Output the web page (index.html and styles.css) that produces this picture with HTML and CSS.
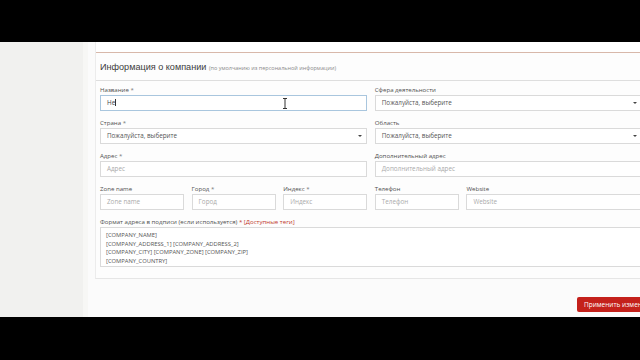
FILE: index.html
```html
<!DOCTYPE html>
<html lang="ru">
<head>
<meta charset="utf-8">
<title>Информация о компании</title>
<link rel="stylesheet" href="styles.css">
</head>
<body>
<div class="screen">
  <div class="bar"></div>
  <div class="main">
    <aside class="sidebar"></aside>
    <div class="gutter"></div>
    <div class="content">
      <section class="card">
        <div class="card-top"></div>
        <h2 class="card-title">Информация о компании <small>(по умолчанию из персональной информации)</small></h2>
        <div class="form">
          <div class="field half">
            <label>Название <span class="req">*</span></label>
            <div class="input focus">He<span class="caret"></span></div>
          </div>
          <div class="field half">
            <label>Сфера деятельности</label>
            <div class="input select">Пожалуйста, выберите<span class="arrow"></span></div>
          </div>
          <div class="field half">
            <label>Страна <span class="req">*</span></label>
            <div class="input select">Пожалуйста, выберите<span class="arrow"></span></div>
          </div>
          <div class="field half">
            <label>Область</label>
            <div class="input select">Пожалуйста, выберите<span class="arrow"></span></div>
          </div>
          <div class="field half">
            <label>Адрес <span class="req">*</span></label>
            <div class="input ph">Адрес</div>
          </div>
          <div class="field half">
            <label>Дополнительный адрес</label>
            <div class="input ph">Дополнительный адрес</div>
          </div>
          <div class="field">
            <label>Zone name</label>
            <div class="input ph">Zone name</div>
          </div>
          <div class="field">
            <label>Город <span class="req">*</span></label>
            <div class="input ph">Город</div>
          </div>
          <div class="field">
            <label>Индекс <span class="req">*</span></label>
            <div class="input ph">Индекс</div>
          </div>
          <div class="field">
            <label>Телефон</label>
            <div class="input ph">Телефон</div>
          </div>
          <div class="field wide2">
            <label>Website</label>
            <div class="input ph">Website</div>
          </div>
          <div class="field full">
            <label>Формат адреса в подписи (если используется) <span class="req red">*</span> <a class="tags">[Доступные теги]</a></label>
            <div class="textarea">[COMPANY_NAME]<br>[COMPANY_ADDRESS_1] [COMPANY_ADDRESS_2]<br>[COMPANY_CITY] [COMPANY_ZONE] [COMPANY_ZIP]<br>[COMPANY_COUNTRY]<br>[COMPANY_WEBSITE]</div>
          </div>
        </div>
      </section>
      <div class="actions"><button class="btn">Применить изменения</button></div>
    </div>
  </div>
  <div class="bar bottom"></div>
  <svg class="cursor" width="6" height="11" viewBox="0 0 6 11"><path d="M1 0.5h4M3 0.5v10M1 10.5h4" stroke="#333" stroke-width="1" fill="none"/></svg>
</div>
</body>
</html>
```

FILE: styles.css
```css
* { box-sizing: border-box; }
html, body { margin: 0; padding: 0; background: #000; }
body { width: 640px; height: 360px; overflow: hidden; font-family: "Open Sans", "Liberation Sans", sans-serif; }
.screen { position: relative; width: 640px; height: 360px; display: flex; flex-direction: column; overflow: hidden; }
.bar { height: 42px; background: #000; flex: none; }
.bar.bottom { height: 43px; }
.main { height: 275px; display: flex; background: #fafafa; overflow: hidden; }
.sidebar { width: 83px; flex: none; background: #f1f1ef; }
.gutter { width: 5px; flex: none; background: #f7f7f5; }
.content { flex: none; width: 600px; padding-left: 7px; background: #fbfbfb; }
.card { width: 570px; background: #fdfdfd; border-left: 1px solid #ececec; border-bottom: 1px solid #e6e6e6; padding-bottom: 11px; }
.card-top { height: 11px; border-bottom: 1px solid #d8b8aa; background: #fff; }
.card-title { margin: 0; padding: 8px 0 5px 4px; font-family: "Liberation Sans", Arial, sans-serif; font-size: 9.1px; line-height: 13px; font-weight: 400; color: #3c3c3c; border-bottom: 1px solid #dedede; white-space: nowrap; }
.card-title small { font-family: "Open Sans", "Liberation Sans", sans-serif; font-size: 5.5px; color: #8a8a8a; }
.form { display: grid; grid-template-columns: repeat(6, 84px); column-gap: 7.6px; row-gap: 7px; padding: 4px 0 0 4px; }
.field { grid-column: span 1; min-width: 0; }
.field.half { grid-column: span 3; }
.field.wide2 { grid-column: span 2; }
.field.full { grid-column: span 6; }
.field label { display: block; font-size: 6.1px; line-height: 9px; margin-bottom: 1px; color: #4f4f4f; white-space: nowrap; }
.req { color: #777; }
.req.red { color: #c0392b; }
.tags { color: #c0392b; }
.input { position: relative; height: 16px; border: 1px solid #dadada; background: #fff; font-size: 6.3px; line-height: 14px; padding: 0 6px; color: #444; white-space: nowrap; overflow: hidden; }
.input.focus { border-color: #a9c6de; }
.input.ph { color: #aaa; }
.input.select { color: #555; }
.caret { display: inline-block; width: 1px; height: 7px; background: #333; vertical-align: -1px; }
.arrow { position: absolute; right: 4px; top: 6px; width: 0; height: 0; border-left: 2px solid transparent; border-right: 2px solid transparent; border-top: 2.5px solid #444; }
.textarea { height: 40px; border: 1px solid #dadada; background: #fff; padding: 3px 5px; font-size: 5.8px; line-height: 8.6px; color: #555; overflow: hidden; white-space: nowrap; }
.actions { display: flex; justify-content: flex-start; padding: 18px 0 0 482px; }
.btn { height: 15px; padding: 0 7px; border: 0; border-radius: 2px; background: #c4211b; color: #fff; font-family: inherit; font-size: 6.5px; line-height: 15px; white-space: nowrap; }
.cursor { position: absolute; left: 282px; top: 98px; }
```
